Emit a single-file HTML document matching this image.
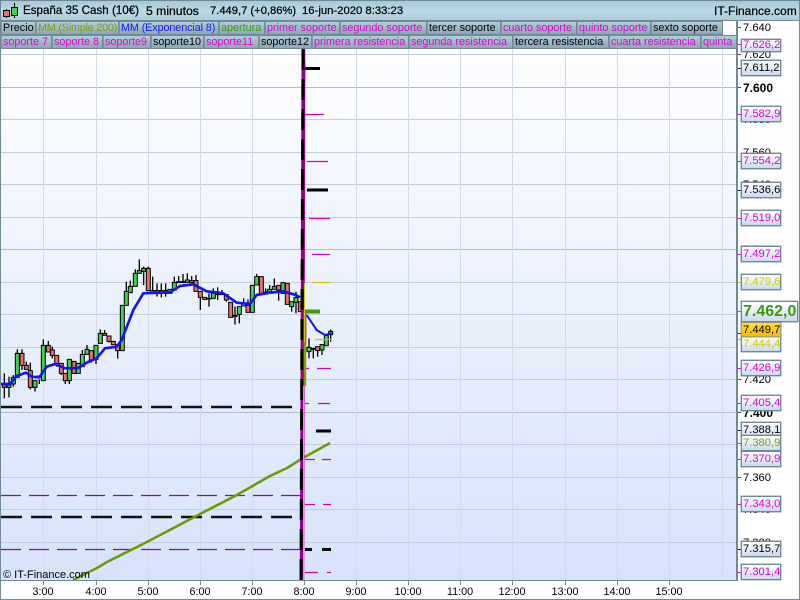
<!DOCTYPE html>
<html><head><meta charset="utf-8"><style>
html,body{margin:0;padding:0;background:#fff}
#p{position:relative;width:800px;height:600px;overflow:hidden;background:#fff;font-family:"Liberation Sans",sans-serif;font-size:11px;color:#000}
#p div{position:absolute;white-space:nowrap;box-sizing:border-box}
.h{top:3px;height:16px;line-height:16px;font-size:12px;-webkit-text-stroke:.25px #000;color:#000}
.t{height:14px;line-height:12px;background:linear-gradient(#b3cdd9,#8ba7b4);border:1px solid #6f8a96;border-left-color:#7d98a5;padding-left:1px;overflow:hidden;font-size:10.8px;color:#e000d0}
.t.k{color:#000}
.a{left:743px;height:12px;line-height:14px;font-size:11.2px}
.b{font-weight:bold;font-size:12px}
.l{left:741px;width:40px;height:16px;line-height:15px;border:1px solid #6f8a96;background:linear-gradient(#fff,#cbdaf0);padding-left:1px;font-size:11.2px;color:#e000d0;box-shadow:0 0 0 .4px #6f8a96}
.l.k{color:#000}
.x{top:586px;height:12px;line-height:12px;font-size:10.8px;text-align:center;width:40px}
</style></head><body><div id="p">

<svg style="position:absolute;left:0;top:0" width="800" height="600" viewBox="0 0 800 600">
<defs><linearGradient id="bg" x1="0" y1="0" x2="0" y2="1"><stop offset="0" stop-color="#fff"/><stop offset="1" stop-color="#d6e3fb"/></linearGradient></defs>
<rect x="1" y="21" width="735" height="559" fill="url(#bg)"/>
<path fill="none" stroke="#c6cbe0" d="M1 54.5H736M1 119.5H736M1 152.5H736M1 184.5H736M1 217.5H736M1 282.5H736M1 314.5H736M1 347.5H736M1 379.5H736M1 444.5H736M1 477.5H736M1 509.5H736M1 542.5H736"/>
<path fill="none" stroke="#b4bace" d="M1 87.5H736M1 249.5H736M1 412.5H736"/>
<path fill="none" stroke="#d2daea" d="M43.5 21V580M96.5 21V580M148.5 21V580M200.5 21V580M252.5 21V580M304.5 21V580M356.5 21V580M408.5 21V580M460.5 21V580M512.5 21V580M565.5 21V580M617.5 21V580M669.5 21V580M722.5 21V580"/>

<!-- dashed levels -->
<path fill="none" stroke="#111" stroke-width="2.5" stroke-dasharray="21 9" d="M1 407H292M1 517H292"/>
<path fill="none" stroke="#a000a0" stroke-width="1.2" stroke-dasharray="20 8" d="M1 495.5H300M1 549.5H300"/>

<!-- olive MA -->
<path fill="none" stroke="#6f9a08" stroke-width="2.6" stroke-linejoin="round" d="M73 580L97 568L107 562L143 544L183 523L200 514L235 496L270 476L287 468L303 458L330 443"/>

<!-- candles part 1 -->
<g transform="translate(0,250) scale(.3333)">
<path fill="none" stroke="#000" stroke-width="4" d="M13 370V445M27 380V442M40 375V410M52 298V312M66 298V360M79 335V350M91 338V418M105 400V425M118 388V402M130 268V290M145 273V290M157 290V325M170 340V350M184 340V375M196 390V402M208 390V402M222 360V372M247 300V315M261 285V300M274 332V338M288 328V342M301 238V280M314 240V250M327 274V278M353 300V326M379 95V125M391 92V110M406 58V72M418 28V62M431 50V105M445 50V56M458 80V122M471 100V140M484 100V142M497 100V140"/>
<path fill="#44d04c" stroke="#000" stroke-width="3" d="M21 405h12v7h-12zM34 382h12v20h-12zM46 310h12v72h-12zM99 392h12v20h-12zM124 286h12v106h-12zM202 328h12v64h-12zM229 340h12v30h-12zM241 313h12v37h-12zM255 298h12v15h-12zM282 286h12v42h-12zM295 250h12v30h-12zM361 166h12v136h-12zM373 124h12v42h-12zM385 109h12v19h-12zM400 70h12v39h-12zM412 62h12v8h-12zM425 55h12v9h-12zM504 118h12v12h-12z"/>
<path fill="#e8706a" stroke="#000" stroke-width="3" d="M7 405h12v7h-12zM60 310h12v36h-12zM73 346h12v12h-12zM85 362h12v50h-12zM112 378h12v4h-12zM139 286h12v20h-12zM151 300h12v16h-12zM164 316h12v24h-12zM178 340h12v30h-12zM190 370h12v22h-12zM216 334h12v36h-12zM268 302h12v30h-12zM308 250h12v6h-12zM321 258h12v16h-12zM334 274h12v10h-12zM347 284h12v18h-12zM439 55h12v67h-12zM452 122h12v8h-12zM465 122h12v8h-12zM478 122h12v8h-12zM491 122h12v8h-12z"/>
<path fill="none" stroke="#1414f0" stroke-width="8" stroke-linejoin="round" d="M0 402L30 402L50 378L78 368L95 380L118 382L140 350L165 342L195 355L235 354L260 338L290 325L315 295L350 290L365 270L400 180L430 130L510 127"/>
</g>

<!-- candles part 2 -->
<g transform="translate(170,250) scale(.3333)">
<path fill="none" stroke="#000" stroke-width="4" d="M13 80V97M26 78V95M39 72V95M52 70V90M65 78V92M78 75V92M91 142V180M117 130V170M130 115V130M143 112V150M156 120V130M169 150V155M195 170V224M208 193V220M221 145V160M234 148V166M260 72V80M287 115V126M299 105V118M313 85V110M326 120V152M365 170V185M378 125V190M417 265V325M430 298V325M443 302V320M456 300V315M482 238V275"/>
<path fill="#44d04c" stroke="#000" stroke-width="3" d="M7 97h12v23h-12zM46 90h12v7h-12zM124 130h12v15h-12zM202 170h12v23h-12zM215 160h12v8h-12zM241 106h12v81h-12zM254 80h12v25h-12zM293 118h12v7h-12zM307 110h12v8h-12zM333 98h12v32h-12zM359 155h12v15h-12zM372 143h12v14h-12zM411 292h12v13h-12zM450 284h12v16h-12zM463 256h12v31h-12zM476 244h12v10h-12z"/>
<path fill="#e8706a" stroke="#000" stroke-width="3" d="M20 95h12v3h-12zM33 95h12v3h-12zM59 92h12v6h-12zM72 92h12v32h-12zM85 124h12v18h-12zM98 142h12v6h-12zM111 145h12v2h-12zM137 130h12v4h-12zM150 130h12v4h-12zM163 134h12v16h-12zM176 157h12v45h-12zM189 196h12v3h-12zM228 166h12v21h-12zM268 80h12v50h-12zM281 126h12v4h-12zM320 106h12v14h-12zM346 100h12v63h-12zM385 155h12v30h-12zM424 295h12v3h-12zM437 290h12v12h-12z"/>
<path fill="none" stroke="#1414f0" stroke-width="8" stroke-linejoin="round" d="M0 127L30 108L70 103L110 124L160 130L200 158L240 162L260 135L300 128L340 124L375 134L390 142"/>
<path fill="none" stroke="#1414f0" stroke-width="6" stroke-linejoin="round" d="M410 195L440 240L465 255L485 250"/>
</g>

<!-- level stubs -->
<path fill="none" stroke="#000" stroke-width="3" d="M305 68.5H320M307 190H328M316 431H331M305 549.5H312M322 549.5H331"/>
<path fill="none" stroke="#d000c0" stroke-width="1.3" d="M305 114.5H324M307 161.5H328M309 218.5H330M312 254.5H330M303 368.5H309M317 368.5H331M305 403.5H309M318 403.5H330M305 459.5H315M322 459.5H331M305 504.5H315M323 504.5H331M305 572.5H318M327 572.5H331"/>
<path fill="none" stroke="#cfc800" stroke-width="1.3" d="M312 282.5H330M315 339.5H331"/>
<path fill="none" stroke="#3f9a08" stroke-width="4" d="M305 311.5H320"/>

<!-- vertical cluster -->
<path fill="none" stroke="#f000e0" stroke-width="1.2" d="M304.8 60L304.2 300L303.6 580"/>
<path fill="none" stroke="#90008e" stroke-width="3.6" d="M303.4 49L302.6 300L301.6 580"/>
<path fill="none" stroke="#000" stroke-width="3" stroke-dasharray="21 9" d="M303 49L302 300L301 580"/>
<path fill="none" stroke="#b06030" stroke-width="3" d="M305 310V345"/>
<path fill="none" stroke="#c8c800" stroke-width="1" d="M304.5 283V345M303.5 386V580"/>
<path fill="none" stroke="#8a9a00" stroke-width="2.5" d="M305 342V386"/>

<!-- axis ticks -->
<path fill="none" stroke="#445" stroke-width="1" d="M737 54.5h4M737 87.5h4M737 379.5h4M737 412.5h4M737 477.5h4M737 27.5h4"/>
<path fill="none" stroke="#000" stroke-width="1" d="M737 68.5h4M737 190.5h4M737 430.5h4M737 549.5h4"/>
<path fill="none" stroke="#e000d0" stroke-width="1" d="M737 44.5h4M737 114.5h4M737 161.5h4M737 218.5h4M737 254.5h4M737 368.5h4M737 403.5h4M737 459.5h4M737 504.5h4M737 572.5h4"/>
<path fill="none" stroke="#cfc800" stroke-width="1" d="M737 282.5h4M737 339.5h4"/>
<path fill="none" stroke="#3f9a08" stroke-width="1" d="M737 311.5h4M737 443.5h4"/>
<path fill="none" stroke="#1414f0" stroke-width="1" d="M737 333.5h4"/>
<path fill="none" stroke="#6f8a96" d="M43.5 581v4M96.5 581v4M148.5 581v4M200.5 581v4M252.5 581v4M304.5 581v4M356.5 581v4M408.5 581v4M460.5 581v4M512.5 581v4M565.5 581v4M617.5 581v4M669.5 581v4"/>

<!-- chart frame -->
<rect x="736" y="21" width="2" height="560" fill="#6f8a96"/>
<rect x="0" y="580" width="738" height="1" fill="#6f8a96"/>
<rect x="0" y="0" width="1" height="600" fill="#6f8a96"/>
<rect x="799" y="0" width="1" height="600" fill="#6f8a96"/>
<rect x="0" y="599" width="800" height="1" fill="#6f8a96"/>
</svg>

<!-- header -->
<div style="left:0;top:0;width:800px;height:21px;background:linear-gradient(#a9c8d6,#bcd9e5 50%,#afccd9);border:1px solid #6f8a96;border-bottom-color:#6f8a96"></div>
<svg style="position:absolute;left:0;top:0" width="22" height="20"><path stroke="#000" d="M6.5 9v9M14.5 3v15"/><rect x="3.5" y="10.5" width="6" height="6" fill="#e8706a" stroke="#000"/><rect x="11.5" y="7.5" width="6" height="8" fill="#44d04c" stroke="#000"/></svg>
<div class="h" style="left:23px;font-size:11.6px">España 35 Cash (10€)</div>
<div class="h" style="left:146px;font-size:12.2px">5 minutos</div>
<div class="h" style="left:210px;font-size:11.2px">7.449,7 (+0,86%)</div>
<div class="h" style="left:302px;font-size:11.3px">16-jun-2020 8:33:23</div>
<div class="h" style="left:714px">IT-Finance.com</div>

<!-- tabs row 1 -->
<div class="t k" style="left:1px;top:21px;width:35px">Precio</div>
<div class="t" style="left:36px;top:21px;width:83px;color:#7f9f00;letter-spacing:-.2px">MM (Simple 200)</div>
<div class="t" style="left:119px;top:21px;width:100px;color:#1818ff;letter-spacing:-.1px">MM (Exponencial 8)</div>
<div class="t" style="left:219px;top:21px;width:46px;color:#3a9a0a">apertura</div>
<div class="t" style="left:265px;top:21px;width:75px">primer soporte</div>
<div class="t" style="left:340px;top:21px;width:87px">segundo soporte</div>
<div class="t k" style="left:427px;top:21px;width:74px">tercer soporte</div>
<div class="t" style="left:501px;top:21px;width:76px">cuarto soporte</div>
<div class="t" style="left:577px;top:21px;width:74px">quinto soporte</div>
<div class="t k" style="left:651px;top:21px;width:72px">sexto soporte</div>

<!-- tabs row 2 -->
<div class="t" style="left:1px;top:35px;width:51px">soporte 7</div>
<div class="t" style="left:52px;top:35px;width:51px">soporte 8</div>
<div class="t" style="left:103px;top:35px;width:48px">soporte9</div>
<div class="t k" style="left:151px;top:35px;width:53px">soporte10</div>
<div class="t" style="left:204px;top:35px;width:55px">soporte11</div>
<div class="t k" style="left:259px;top:35px;width:53px">soporte12</div>
<div class="t" style="left:312px;top:35px;width:97px">primera resistencia</div>
<div class="t" style="left:409px;top:35px;width:104px">segunda resistencia</div>
<div class="t k" style="left:513px;top:35px;width:96px">tercera resistencia</div>
<div class="t" style="left:609px;top:35px;width:92px">cuarta resistencia</div>
<div class="t" style="left:701px;top:35px;width:36px">quinta resistencia</div>

<!-- axis labels -->
<div class="a" style="top:21px">7.640</div>
<div class="a" style="top:48px">7.620</div>
<div class="a b" style="top:81px">7.600</div>
<div class="a" style="top:113px">7.580</div>
<div class="a" style="top:146px">7.560</div>
<div class="a" style="top:178px">7.540</div>
<div class="a" style="top:211px">7.520</div>
<div class="a b" style="top:243px">7.500</div>
<div class="a" style="top:276px">7.480</div>
<div class="a" style="top:373px">7.420</div>
<div class="a b" style="top:406px">7.400</div>
<div class="a" style="top:471px">7.360</div>
<div class="a" style="top:503px">7.340</div>
<div class="a" style="top:536px">7.320</div>

<!-- price boxes -->
<div class="l" style="top:39px;height:13px;line-height:11px">7.626,2</div>
<div class="l k" style="top:60px">7.611,2</div>
<div class="l" style="top:106px">7.582,9</div>
<div class="l" style="top:153px">7.554,2</div>
<div class="l k" style="top:182px">7.536,6</div>
<div class="l" style="top:210px">7.519,0</div>
<div class="l" style="top:246px">7.497,2</div>
<div class="l" style="top:274px;color:#d0c800">7.479,6</div>
<div class="l" style="top:336px;color:#d0c800">7.444,4</div>
<div class="l" style="top:322px;height:15px;line-height:14px;color:#000;background:linear-gradient(#ffe030,#fdb800);border-color:#b0a060">7.449,7</div>
<div class="l" style="left:741px;top:301px;width:57px;height:21px;line-height:19px;font-size:16px;font-weight:bold;color:#3a9a0a">7.462,0</div>
<div class="l" style="top:360px">7.426,9</div>
<div class="l" style="top:395px">7.405,4</div>
<div class="l k" style="top:422px">7.388,1</div>
<div class="l" style="top:435px;color:#7f9f00">7.380,9</div>
<div class="l" style="top:451px">7.370,9</div>
<div class="l" style="top:496px">7.343,0</div>
<div class="l k" style="top:541px">7.315,7</div>
<div class="l" style="top:564px">7.301,4</div>

<!-- time axis -->
<div class="x" style="left:23px">3:00</div>
<div class="x" style="left:76px">4:00</div>
<div class="x" style="left:128px">5:00</div>
<div class="x" style="left:180px">6:00</div>
<div class="x" style="left:232px">7:00</div>
<div class="x" style="left:284px">8:00</div>
<div class="x" style="left:336px">9:00</div>
<div class="x" style="left:388px">10:00</div>
<div class="x" style="left:440px">11:00</div>
<div class="x" style="left:492px">12:00</div>
<div class="x" style="left:545px">13:00</div>
<div class="x" style="left:597px">14:00</div>
<div class="x" style="left:649px">15:00</div>

<div style="left:3px;top:569px;height:12px;line-height:12px;font-size:11px">© IT-Finance.com</div>
</div></body></html>
